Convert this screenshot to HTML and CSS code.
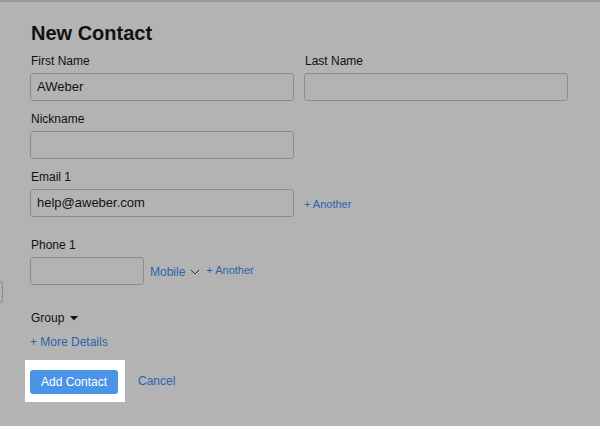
FILE: index.html
```html
<!DOCTYPE html>
<html>
<head>
<meta charset="utf-8">
<link rel="stylesheet" href="styles.css">
</head>
<body>
<div class="edge-box"></div>
<div class="page">
  <h1 class="title">New Contact</h1>
  <div class="row first">
    <div class="field">
      <label class="label">First Name</label>
      <div class="input wide">AWeber</div>
    </div>
    <div class="field">
      <label class="label">Last Name</label>
      <div class="input wide"></div>
    </div>
  </div>
  <div class="row">
    <div class="field">
      <label class="label">Nickname</label>
      <div class="input wide"></div>
    </div>
  </div>
  <div class="row">
    <div class="field">
      <label class="label">Email 1</label>
      <div class="inline">
        <div class="input wide">help@aweber.com</div>
        <a class="link small another">+ Another</a>
      </div>
    </div>
  </div>
  <div class="row phone-row">
    <div class="field">
      <label class="label">Phone 1</label>
      <div class="inline">
        <div class="input short"></div>
        <a class="link mobile">Mobile
          <svg class="chev" width="10" height="6" viewBox="0 0 10 6"><path d="M1 1 L5 5 L9 1" fill="none" stroke="#333" stroke-width="1"/></svg>
        </a>
        <a class="link small another2">+ Another</a>
      </div>
    </div>
  </div>
  <div class="group">Group <svg class="caret" width="8" height="5" viewBox="0 0 8 5"><path d="M0 0 L8 0 L4 4.5 Z" fill="#111"/></svg></div>
  <a class="link more">+ More Details</a>
  <div class="actions">
    <div class="highlight"><button class="btn">Add Contact</button></div>
    <a class="link cancel">Cancel</a>
  </div>
</div>
</body>
</html>
```
FILE: styles.css
```css
html, body {
  margin: 0;
  padding: 0;
}
body {
  width: 600px;
  height: 426px;
  overflow: hidden;
  background: #b3b3b3;
  border-top: 2px solid #999999;
  box-sizing: border-box;
  font-family: "Liberation Sans", Arial, sans-serif;
  color: #111;
  position: relative;
}
.edge-box {
  position: absolute;
  left: -20px;
  top: 279px;
  width: 21px;
  height: 20px;
  border: 1px solid #8a8a8a;
  border-radius: 3px;
}
.page {
  padding-left: 30px;
}
.title {
  margin: 0;
  padding-top: 19px;
  font-size: 20px;
  line-height: 24px;
  font-weight: bold;
  padding-left: 1px;
}
.row {
  display: flex;
  gap: 10px;
}
.field {
  display: flex;
  flex-direction: column;
}
.label {
  font-size: 12px;
  line-height: 14px;
  margin-top: 11px;
  margin-bottom: 5px;
  padding-left: 1px;
}
.row.first .label { margin-top: 9px; }
.input {
  box-sizing: border-box;
  height: 28px;
  border: 1px solid #8c8c8c;
  border-radius: 3px;
  font-size: 13px;
  line-height: 26px;
  padding-left: 6px;
}
.wide { width: 264px; }
.short { width: 114px; }
.inline {
  display: flex;
  align-items: center;
}
.link {
  color: #2d63ab;
  text-decoration: none;
}
.small { font-size: 11px; }
.another {
  margin-left: 10px;
  margin-top: 2px;
}
.phone-row .label { margin-top: 21px; }
.mobile {
  font-size: 12px;
  margin-left: 6px;
  display: flex;
  align-items: center;
  margin-top: 1px;
}
.chev { margin-left: 5px; margin-top: 1px; }
.another2 {
  margin-left: 6px;
  margin-top: -2px;
}
.group {
  font-size: 12px;
  line-height: 14px;
  margin-top: 26px;
  padding-left: 1px;
  display: flex;
  align-items: center;
}
.caret { margin-left: 6px; }
.more {
  display: block;
  font-size: 12px;
  line-height: 14px;
  margin-top: 10px;
}
.actions {
  display: flex;
  align-items: center;
  margin-top: 11px;
}
.highlight {
  background: #ffffff;
  margin-left: -5px;
  padding: 10px 7px 8px 5px;
  display: flex;
}
.btn {
  width: 88px;
  height: 24px;
  border: none;
  border-radius: 3px;
  background: #4a93e6;
  color: #ffffff;
  font-family: "Liberation Sans", Arial, sans-serif;
  font-size: 12px;
  padding: 0;
}
.cancel {
  font-size: 12px;
  margin-left: 13px;
}
```
